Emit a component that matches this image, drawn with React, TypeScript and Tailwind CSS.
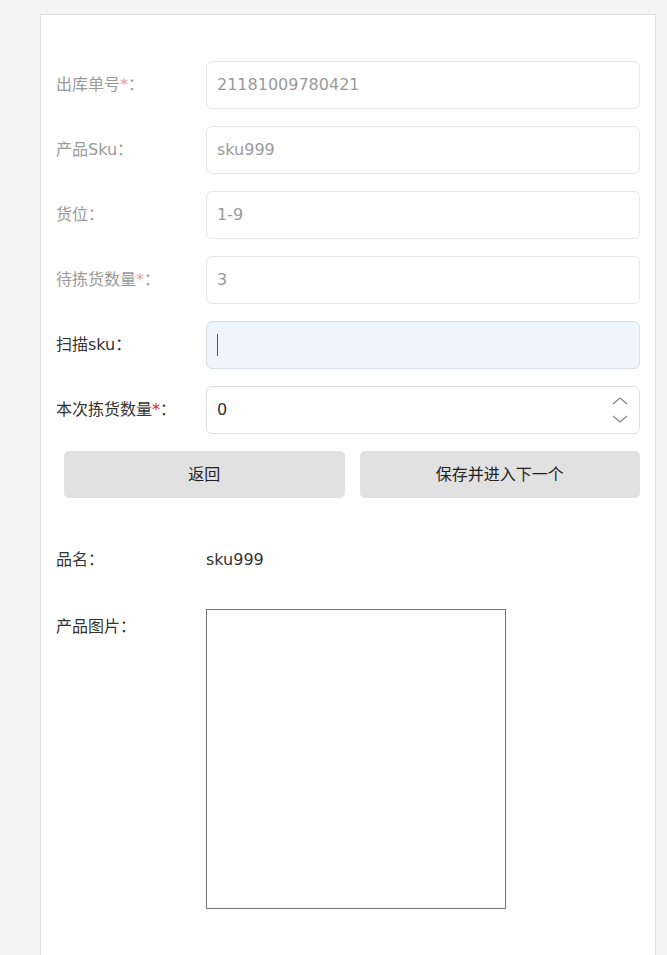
export default function App() {
  const f = { fontFamily: '"DejaVu Sans","Noto Sans CJK SC",sans-serif' };
  const rows = [
    { l: "出库单号", star: true, v: "21181009780421", dis: true },
    { l: "产品Sku", v: "sku999", dis: true },
    { l: "货位", v: "1-9", dis: true },
    { l: "待拣货数量", star: true, v: "3", dis: true },
  ];
  return (
    <div className="min-h-[955px] bg-[#f4f4f4] pl-[40px] pr-[11px] pt-[14px]" style={f}>
      <div className="min-h-[941px] bg-white border border-[#e2e2e2] border-b-0 pl-[15px] pr-[15px] pt-[46px] text-[16px]">
        <div className="flex flex-col gap-[17px]">
          {rows.map((r) => (
            <div key={r.l} className="flex items-center h-[48px]">
              <div className="w-[150px] text-[#9a9a9a]">
                {r.l}
                {r.star && <span className="text-[#f09a9a]">*</span>}：
              </div>
              <div className="flex-1 h-[48px] border border-[#e6e6e6] rounded-[6px] flex items-center px-[10px] text-[#9a9a9a]">{r.v}</div>
            </div>
          ))}
          <div className="flex items-center h-[48px]">
            <div className="w-[150px] text-[#333]">扫描sku：</div>
            <div className="flex-1 h-[48px] border border-[#d8dce3] rounded-[6px] bg-[#eef5fd] flex items-center px-[10px]">
              <div className="w-[1px] h-[22px] bg-[#2250e0]" />
            </div>
          </div>
          <div className="flex items-center h-[48px]">
            <div className="w-[150px] text-[#333]">
              本次拣货数量<span className="text-[#e02020]">*</span>：
            </div>
            <div className="flex-1 h-[48px] border border-[#e0e0e0] rounded-[6px] flex items-center px-[10px] text-[#333] justify-between">
              <span>0</span>
              <svg width="18" height="30" viewBox="0 0 18 30" fill="none" stroke="#888" strokeWidth="1.3">
                <path d="M2 9 L9 3 L16 9" />
                <path d="M2 21 L9 27 L16 21" />
              </svg>
            </div>
          </div>
        </div>
        <div className="flex gap-[15px] mt-[17px] pl-[8px]">
          <div className="flex-1 h-[47px] bg-[#e1e1e1] rounded-[5px] flex items-center justify-center text-[#222]">返回</div>
          <div className="flex-1 h-[47px] bg-[#e1e1e1] rounded-[5px] flex items-center justify-center text-[#222]">保存并进入下一个</div>
        </div>
        <div className="flex mt-[50px] text-[#333]">
          <div className="w-[150px]">品名：</div>
          <div>sku999</div>
        </div>
        <div className="flex mt-[37px] text-[#333]">
          <div className="w-[150px] pt-[6px]">产品图片：</div>
          <div className="w-[300px] h-[300px] border border-[#777]" />
        </div>
      </div>
    </div>
  );
}
